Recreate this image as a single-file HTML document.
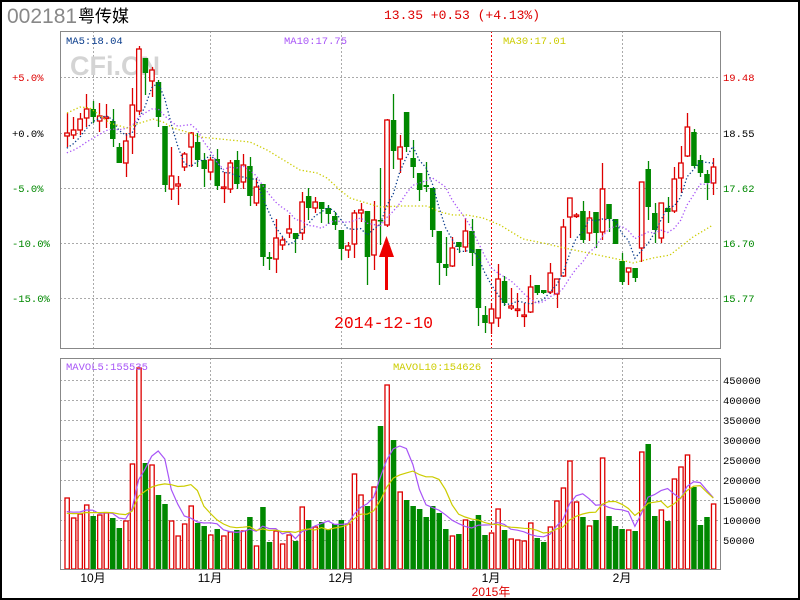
<!DOCTYPE html>
<html><head><meta charset="utf-8"><style>
html,body{margin:0;padding:0;background:#fff;}
#w{position:relative;width:800px;height:600px;overflow:hidden;background:#fff;}
svg{position:absolute;left:0;top:0;}
</style></head><body><div id="w">
<svg id="s" width="800" height="600" xmlns="http://www.w3.org/2000/svg" font-family="Liberation Mono, monospace">
<rect x="1" y="1" width="798" height="598" fill="none" stroke="#000" stroke-width="2"/>
<text x="7" y="23" font-family="Liberation Sans, sans-serif" font-size="21" fill="#888">002181</text>
<text x="78" y="22" font-family="Liberation Sans, 'Noto Sans CJK SC', sans-serif" font-size="17" fill="#000">粤传媒</text>
<text x="384" y="19" font-size="13" fill="#d00">13.35 +0.53 (+4.13%)</text>
<g id="grid" stroke="#aaa" stroke-dasharray="2,2" stroke-width="1"></g>
<text x="70" y="75" font-family="Liberation Sans, sans-serif" font-weight="bold" font-size="27" fill="#d4d4d4">CFi.CN</text>
<g id="cand"></g>
<g id="vol"></g>
<g id="ma"></g>
<rect x="60.5" y="31.5" width="660" height="317" fill="none" stroke="#888"/>
<rect x="60.5" y="358.5" width="660" height="211" fill="none" stroke="#888"/>
<text x="66" y="44" font-size="10.5" fill="#0a3c8c">MA5:18.04</text>
<text x="284" y="44" font-size="10.5" fill="#a855f7">MA10:17.75</text>
<text x="503" y="44" font-size="10.5" fill="#cccc00">MA30:17.01</text>
<text x="66" y="370" font-size="10.5" fill="#a855f7">MAVOL5:155535</text>
<text x="393" y="370" font-size="10.5" fill="#cccc00">MAVOL10:154626</text>
<g font-size="10.5">
<text x="12" y="81" fill="#d00">+5.0%</text>
<text x="12" y="137" fill="#000">+0.0%</text>
<text x="12" y="192" fill="#080">-5.0%</text>
<text x="12" y="247" fill="#080">-10.0%</text>
<text x="12" y="302" fill="#080">-15.0%</text>
<text x="723" y="81" fill="#d00">19.48</text>
<text x="723" y="137" fill="#000">18.55</text>
<text x="723" y="192" fill="#080">17.62</text>
<text x="723" y="247" fill="#080">16.70</text>
<text x="723" y="302" fill="#080">15.77</text>
<text x="723" y="384" fill="#000">450000</text>
<text x="723" y="404" fill="#000">400000</text>
<text x="723" y="424" fill="#000">350000</text>
<text x="723" y="444" fill="#000">300000</text>
<text x="723" y="464" fill="#000">250000</text>
<text x="723" y="484" fill="#000">200000</text>
<text x="723" y="504" fill="#000">150000</text>
<text x="723" y="524" fill="#000">100000</text>
<text x="723" y="544" fill="#000">50000</text>
</g>
<g font-family="Liberation Sans, 'Noto Sans CJK SC', sans-serif" font-size="12" fill="#000" text-anchor="middle">
<text x="93" y="582">10月</text>
<text x="210" y="582">11月</text>
<text x="341" y="582">12月</text>
<text x="491" y="582">1月</text>
<text x="622" y="582">2月</text>
<text x="491" y="596" fill="#d00">2015年</text>
</g>
<text x="334" y="328" font-size="16.5" fill="#e00">2014-12-10</text>
<rect x="385" y="252" width="3" height="38" fill="#e00"/>
<polygon points="386.5,236 379,257 394,257" fill="#e00"/>
</svg>
<script>
var ns="http://www.w3.org/2000/svg";
function el(p,t,a){var e=document.createElementNS(ns,t);for(var k in a)e.setAttribute(k,a[k]);p.appendChild(e);return e;}
var g=document.getElementById('grid');
[77,133,188,243,298].forEach(function(y){el(g,'line',{x1:60,x2:720,y1:y+.5,y2:y+.5});});
[380,400,420,440,460,480,500,520,540].forEach(function(y){el(g,'line',{x1:60,x2:720,y1:y+.5,y2:y+.5});});
[93,210,341,622].forEach(function(x){el(g,'line',{x1:x+.5,x2:x+.5,y1:31,y2:348});el(g,'line',{x1:x+.5,x2:x+.5,y1:358,y2:569});});
el(g,'line',{x1:491.5,x2:491.5,y1:31,y2:348,stroke:'#e00'});el(g,'line',{x1:491.5,x2:491.5,y1:358,y2:569,stroke:'#e00'});
// [red, top, bottom, wickTop, wickBot]
var C=[[1,133,136,113,147],[1,130,135,117,139],[1,119,130,113,135],[1,109,118,94,127],[0,109,117,101,123],[1,116,121,103,132],[1,117,118,104,128],[0,121,139,109,147],[0,147,163,143,163],[1,141,163,133,177],
[1,105,137,88,154],[1,49,111,46,115],[0,58,73,58,95],[1,70,81,67,97],[0,82,117,80,127],[0,126,185,126,192],[1,176,189,147,200],[1,184,186,176,205],[1,154,167,152,171],[1,133,147,132,167],
[0,142,160,133,167],[0,160,169,153,187],[1,160,172,157,180],[0,159,186,149,190],[1,187,188,172,203],[1,163,189,160,193],[0,160,184,151,189],[1,165,182,154,189],[0,166,196,157,206],[1,187,203,178,206],
[0,184,257,184,266],[0,257,259,252,270],[1,238,259,219,273],[1,240,245,237,250],[1,229,233,215,238],[0,233,239,233,253],[1,202,233,192,240],[0,196,208,188,220],[1,202,208,197,213],[0,202,209,202,223],
[0,208,214,205,224],[0,216,225,212,230],[0,230,249,230,260],[1,246,250,242,258],[1,213,244,210,258],[1,210,213,203,222],[0,211,257,211,285],[1,220,255,201,270],[0,220,221,168,245],[1,120,225,119,227],
[0,120,151,94,169],[1,147,159,135,173],[0,112,147,112,152],[0,158,167,140,178],[0,173,190,173,201],[0,185,187,162,192],[0,188,230,188,237],[0,231,263,231,285],[0,264,268,237,276],[1,248,266,237,267],
[0,242,247,242,253],[1,231,247,218,252],[0,231,253,219,266],[0,249,308,249,326],[0,315,323,306,333],[1,309,323,303,334],[1,279,318,264,327],[0,281,303,276,306],[1,306,308,288,310],[1,309,310,293,317],
[1,315,316,303,327],[1,287,312,275,313],[0,285,293,285,295],[0,290,293,290,294],[1,273,292,263,294],[1,279,294,279,308],[1,227,276,219,277],[1,198,217,198,238],[1,215,216,213,218],[0,211,240,201,243],
[1,218,233,211,241],[0,212,233,212,248],[1,189,232,163,240],[0,204,219,204,232],[0,219,244,219,244],[0,261,282,253,285],[1,268,272,268,285],[0,268,278,268,282],[1,182,248,182,262],[0,169,207,161,220],
[0,213,230,203,243],[1,203,238,203,243],[0,208,212,197,223],[1,179,211,167,213],[1,163,178,146,193],[1,127,156,113,157],[0,132,166,129,168],[0,160,173,155,177],[0,174,183,170,200],[1,167,183,158,195]];
var V=[[1,498],[1,518],[1,514],[1,505],[0,516],[1,515],[1,513],[0,518],[0,528],[1,521],[1,464],[1,368],[0,463],[1,465],[0,495],[0,504],[1,521],[1,536],[1,524],[1,506],
[0,523],[0,526],[1,535],[0,529],[1,536],[1,532],[0,530],[1,531],[0,517],[1,546],[0,507],[0,542],[1,531],[1,544],[1,535],[0,541],[1,507],[0,520],[1,527],[0,522],
[0,529],[0,524],[0,520],[1,524],[1,474],[1,495],[0,506],[1,487],[0,426],[1,385],[0,440],[1,492],[0,500],[0,506],[0,509],[0,517],[0,506],[0,513],[0,529],[1,536],
[0,534],[1,520],[0,521],[0,515],[0,535],[1,533],[1,509],[0,530],[1,539],[1,540],[1,541],[1,523],[0,538],[0,542],[1,527],[1,501],[1,488],[1,461],[1,502],[0,517],
[1,526],[0,520],[1,458],[0,516],[0,526],[0,529],[1,530],[0,531],[1,452],[0,444],[0,516],[1,510],[0,521],[1,479],[1,467],[1,455],[0,487],[0,525],[0,517],[1,504]];
var cg=document.getElementById('cand'),vg=document.getElementById('vol'),mg=document.getElementById('ma');
function X(i){return 64.3+6.53*i;}
var closes=[];
C.forEach(function(c,i){var x=X(i),cx=Math.round(x+2.5)+.5,col=c[0]?'#d00':'#080';
el(cg,'line',{x1:cx,x2:cx,y1:c[3],y2:c[4],stroke:col,'stroke-width':1.3});
var h=Math.max(c[2]-c[1],1.5);
if(c[0])el(cg,'rect',{x:x+.5,y:c[1],width:4.5,height:h,fill:'#fff',stroke:col,'stroke-width':1.3});
else el(cg,'rect',{x:x,y:c[1],width:5.5,height:h,fill:col});
closes.push(c[0]?c[1]:c[2]);});
V.forEach(function(v,i){var x=X(i);
if(v[0])el(vg,'rect',{x:x+.7,y:v[1],width:4.3,height:569-v[1],fill:'#fff',stroke:'#d00','stroke-width':1.3});
else el(vg,'rect',{x:x,y:v[1],width:5.5,height:569-v[1],fill:'#080'});});
function ma(arr,n,pad){var out=[];for(var i=0;i<arr.length;i++){var s=0;for(var k=0;k<n;k++){var j=i-k;s+=j>=0?arr[j]:pad;}out.push(s/n);}return out;}
function pl(pts,col,dash){var a={points:pts.join(' '),fill:'none',stroke:col,'stroke-width':dash?1.3:1.2};if(dash)a['stroke-dasharray']='1.3,2.2';el(mg,'polyline',a);}
var m5=ma(closes,5,152),m10=ma(closes,10,155);
pl(m5.map(function(y,i){return (X(i)+2.5).toFixed(1)+','+y.toFixed(1);}),'#0a3c8c',1);
pl(m10.map(function(y,i){return (X(i)+2.5).toFixed(1)+','+y.toFixed(1);}),'#a855f7',1);
pl(["67,113","80,107","90,108","110,123","127,128","140,123","153,119","163,122","173,128","187,132","200,137","250,142","267,150","300,170","317,173","327,178","340,190","350,198","363,202","380,207","400,206","427,206","440,212","453,215","467,215","483,218","500,225","523,239","543,243","560,247","593,254","617,259","633,263","653,258","670,255","693,237","713,225"],'#cccc00',1);
var vh=V.map(function(v){return v[1];});
var v5=ma(vh,5,515),v10=ma(vh,10,515);
pl(v5.map(function(y,i){return (X(i)+2.5).toFixed(1)+','+y.toFixed(1);}),'#a855f7',0);
pl(v10.map(function(y,i){return (X(i)+2.5).toFixed(1)+','+y.toFixed(1);}),'#cccc00',0);
</script>
</div></body></html>
